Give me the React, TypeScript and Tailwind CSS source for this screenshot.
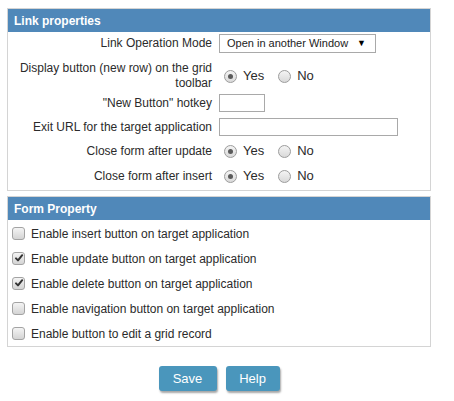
import React from "react";

const font = { fontFamily: '"Liberation Sans", Arial, sans-serif' };

function Radio({ checked }: { checked?: boolean }) {
  return (
    <span className="relative inline-flex h-[13px] w-[13px] shrink-0 items-center justify-center rounded-full border border-[#9c9c9c] bg-gradient-to-b from-[#f4f4f4] to-[#d9d9d9]">
      {checked && <span className="h-[5px] w-[5px] rounded-full bg-[#5a5a5a]" />}
    </span>
  );
}

function Check({ checked }: { checked?: boolean }) {
  return (
    <span className="relative inline-flex h-[13px] w-[13px] shrink-0 items-center justify-center rounded-[3px] border border-[#a3a3a3] bg-gradient-to-b from-[#f4f4f4] to-[#d4d4d4]">
      {checked && (
        <svg width="10" height="10" viewBox="0 0 10 10" className="absolute left-[1px] top-[0px]">
          <path d="M2 5.4 L4 7.4 L8.2 2.2" fill="none" stroke="#333" strokeWidth="2" strokeLinecap="round" strokeLinejoin="round" />
        </svg>
      )}
    </span>
  );
}

function YesNo({ yes }: { yes: boolean }) {
  return (
    <div className="flex items-center whitespace-nowrap pl-[5px]">
      <Radio checked={yes} />
      <span className="ml-[6px] text-[13px]">Yes</span>
      <span className="ml-[14px] flex"><Radio checked={!yes} /></span>
      <span className="ml-[6px] text-[13px]">No</span>
    </div>
  );
}

function Row({ label, children, cls }: { label: React.ReactNode; children?: React.ReactNode; cls: string }) {
  return (
    <div className={"flex items-center " + cls}>
      <div className="w-[204px] shrink-0 text-right leading-[15px]">{label}</div>
      <div className="ml-[7px] flex shrink-0 items-center">{children}</div>
    </div>
  );
}

function Header({ title }: { title: string }) {
  return (
    <div className="flex h-[23px] items-center bg-[#5088b9] pl-[6px] text-[12px] font-bold text-white">{title}</div>
  );
}

export default function App() {
  const checks: [string, boolean][] = [
    ["Enable insert button on target application", false],
    ["Enable update button on target application", true],
    ["Enable delete button on target application", true],
    ["Enable navigation button on target application", false],
    ["Enable button to edit a grid record", false],
  ];
  return (
    <div className="min-h-[401px] w-[454px] bg-white pl-[7px] pt-[8px] text-[12px] text-[#2b2b2b]" style={font}>
      <div className="w-[424px] border border-[#d4d4d4]">
        <Header title="Link properties" />
        <div className="pb-[2px]">
          <Row label="Link Operation Mode" cls="h-[23px]">
            <div className="flex h-[19px] w-[157px] shrink-0 items-center justify-between whitespace-nowrap border border-[#a9a9a9] bg-white pl-[7px] pr-[9px] text-[11px] text-[#222]">
              <span>Open in another Window</span>
              <span className="text-[9px] text-black">▼</span>
            </div>
          </Row>
          <Row label="Display button (new row) on the grid toolbar" cls="mt-[6px] h-[30px]">
            <YesNo yes={true} />
          </Row>
          <Row label={'"New Button" hotkey'} cls="h-[24px]">
            <div className="h-[18px] w-[46px] border border-[#a9a9a9] bg-white" />
          </Row>
          <Row label="Exit URL for the target application" cls="h-[24px]">
            <div className="h-[18px] w-[179px] border border-[#a9a9a9] bg-white" />
          </Row>
          <Row label="Close form after update" cls="h-[24px]">
            <YesNo yes={true} />
          </Row>
          <Row label="Close form after insert" cls="mt-[1px] h-[24px]">
            <YesNo yes={true} />
          </Row>
        </div>
      </div>
      <div className="mt-[5px] w-[424px] border border-[#d4d4d4]">
        <Header title="Form Property" />
        <div className="pt-[1px]">
          {checks.map(([t, c]) => (
            <div key={t} className="flex h-[25px] items-center pl-[4px]">
              <Check checked={c} />
              <span className="ml-[6px]">{t}</span>
            </div>
          ))}
        </div>
      </div>
      <div className="mt-[19px] flex w-[424px] justify-center gap-[9px]">
        <button className="h-[25px] w-[58px] rounded-[3px] bg-[#4a96bc] text-[13px] text-white shadow-[1px_2px_2px_rgba(0,0,0,0.35)]">Save</button>
        <button className="h-[25px] w-[54px] rounded-[3px] bg-[#4a96bc] text-[13px] text-white shadow-[1px_2px_2px_rgba(0,0,0,0.35)]">Help</button>
      </div>
    </div>
  );
}
